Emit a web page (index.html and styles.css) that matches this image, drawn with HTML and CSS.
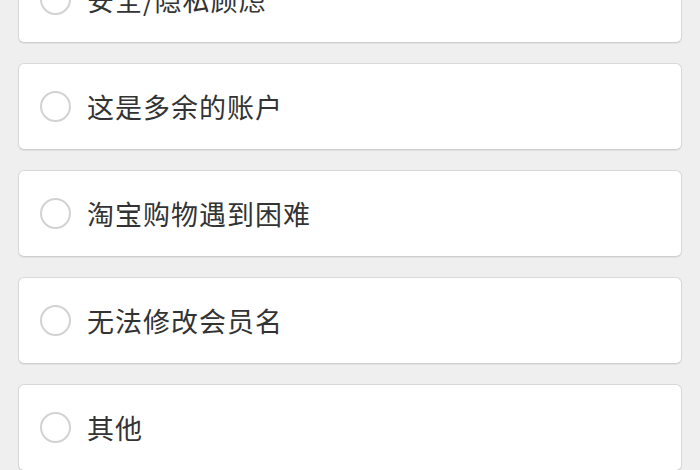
FILE: index.html
```html
<!DOCTYPE html>
<html lang="zh-CN">
<head>
<meta charset="utf-8">
<title>注销原因</title>
<link rel="stylesheet" href="styles.css">
</head>
<body>
<div class="list">
  <label class="option"><span class="radio"></span><span class="label">安全/隐私顾虑</span></label>
  <label class="option"><span class="radio"></span><span class="label">这是多余的账户</span></label>
  <label class="option"><span class="radio"></span><span class="label">淘宝购物遇到困难</span></label>
  <label class="option"><span class="radio"></span><span class="label">无法修改会员名</span></label>
  <label class="option"><span class="radio"></span><span class="label">其他</span></label>
</div>
</body>
</html>
```
FILE: styles.css
```css
html, body {
  margin: 0;
  padding: 0;
  background: #efefef;
  overflow: hidden;
}
body {
  font-family: "Noto Sans CJK SC", "Noto Sans", sans-serif;
  color: #333;
}
.list {
  display: flex;
  flex-direction: column;
  gap: 20px;
  padding: 0 18px 0 18px;
  margin-top: -44px;
}
.option {
  display: flex;
  align-items: center;
  height: 87px;
  box-sizing: border-box;
  background: #fff;
  border: 1px solid #d8d8d8;
  border-bottom-color: #cfcfcf;
  border-radius: 6px;
  box-shadow: 0 1px 1px rgba(0,0,0,0.06);
  padding-left: 21px;
}
.radio {
  width: 31px;
  height: 31px;
  box-sizing: border-box;
  border: 2px solid #d2d2d2;
  border-radius: 50%;
  flex: none;
}
.label {
  margin-left: 16px;
  font-size: 27px;
  letter-spacing: 1px;
  line-height: 1;
  color: #333;
}
```
